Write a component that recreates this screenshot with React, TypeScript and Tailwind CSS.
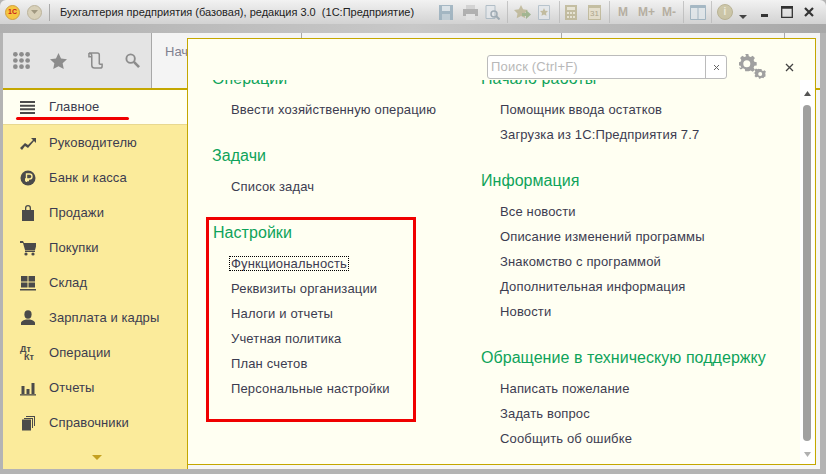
import React from "react";

const F = { fontFamily: '"Liberation Sans", Arial, sans-serif' };

function Ic({ children, w = 16, h = 16, fill = "#4a4a4a" }: { children: React.ReactNode; w?: number; h?: number; fill?: string }) {
  return (
    <svg width={w} height={h} viewBox={`0 0 ${w} ${h}`} fill={fill} className="shrink-0">
      {children}
    </svg>
  );
}

const sideIcons: Record<string, React.ReactNode> = {
  trend: <path d="M0 13l5-5 3 2 5-5-2-2h5v5l-2-2-6 7-3-2-3 4z" />,
  rub: (
    <>
      <circle cx="8" cy="8" r="7.5" />
      <path d="M6.5 12V4h3a2 2 0 010 5h-4.5M5 10.5h4" fill="none" stroke="#fbeb9b" strokeWidth="1.4" />
    </>
  ),
  bag: <path d="M2 5h3V3a3 3 0 016 0v2h3v11H2zM6.3 5h3.4V3a1.7 1.7 0 00-3.4 0z" fillRule="evenodd" />,
  cart: (
    <>
      <path d="M0 1h3l1 2h13l-2 7H5L3 3H0z" />
      <rect x="5" y="10.500" width="10" height="1.500" />
      <circle cx="6" cy="14" r="1.600" />
      <circle cx="13" cy="14" r="1.600" />
    </>
  ),
  grid: (
    <>
      <rect x="1" y="1" width="6.500" height="5.500" />
      <rect x="8.500" y="1" width="6.500" height="5.500" />
      <rect x="1" y="7.500" width="6.500" height="5" />
      <rect x="8.500" y="7.500" width="6.500" height="5" />
      <rect x="0" y="14" width="16" height="1.500" />
    </>
  ),
  user: (
    <>
      <ellipse cx="8" cy="4.500" rx="3.600" ry="4.200" />
      <path d="M1 15v-2c0-2 3-3 5-3.500h4c2 .5 5 1.500 5 3.500v2z" />
    </>
  ),
  bars: (
    <>
      <rect x="1.500" y="6" width="3" height="8" />
      <rect x="6.500" y="9" width="3" height="5" />
      <rect x="11.500" y="3" width="3" height="11" />
      <rect x="0" y="14.200" width="16" height="1.300" />
    </>
  ),
  books: (
    <>
      <rect x="2" y="4.500" width="9" height="11" />
      <path d="M4 3h9v10h-1V4H4zM6 1h9v10h-1V2H6z" />
    </>
  ),
};

const items: [string, string][] = [
  ["trend", "Руководителю"],
  ["rub", "Банк и касса"],
  ["bag", "Продажи"],
  ["cart", "Покупки"],
  ["grid", "Склад"],
  ["user", "Зарплата и кадры"],
  ["dt", "Операции"],
  ["bars", "Отчеты"],
  ["books", "Справочники"],
];

function SideRow({ icon, label }: { icon: string; label: string }) {
  return (
    <div className="h-[35px] flex items-center pl-[17px] gap-[13px] text-[13px] text-[#3c3c50] tracking-[0.1px]">
      {icon === "dt" ? (
        <div className="w-4 h-4 shrink-0 flex flex-col text-[9px] leading-[8px] font-bold text-[#4a4a4a]">
          <span>Дт</span>
          <span className="ml-[4px]">Кт</span>
        </div>
      ) : (
        <Ic>{sideIcons[icon]}</Ic>
      )}
      <span>{label}</span>
    </div>
  );
}

function Heading({ children, className = "" }: { children: React.ReactNode; className?: string }) {
  return <div className={`text-[16px] leading-[20px] text-[#0ea35a] tracking-[0.05px] ${className}`}>{children}</div>;
}

function Links({ list, focus }: { list: string[]; focus?: string }) {
  return (
    <div className="pl-[19px] mt-[8px] flex flex-col">
      {list.map((t) => (
        <div key={t} className="h-[25px] flex items-center text-[13px] text-[#3c3c50] whitespace-nowrap tracking-[0.15px]">
          <span className={t === focus ? "outline outline-1 outline-dotted outline-black -outline-offset-1 px-[2px] -mx-[2px] leading-[15px]" : ""}>{t}</span>
        </div>
      ))}
    </div>
  );
}

function ToolSep({ l = 0, r = 0 }: { l?: number; r?: number }) {
  return <div className="w-px h-[22px] bg-[#b8b8b8] shrink-0" style={{ marginLeft: l, marginRight: r }} />;
}

export default function App() {
  return (
    <div style={F} className="relative w-[826px] h-[474px] overflow-hidden bg-[#b4b4b4] flex flex-col">
      {/* title bar */}
      <div className="h-[24px] shrink-0 flex items-center bg-gradient-to-b from-[#f2f2f2] to-[#d2d2d2] rounded-t-[6px] pl-[5px]">
        <div className="w-[15px] h-[15px] rounded-full bg-[#f6c640] border border-[#d0a040] flex items-center justify-center text-[7px] font-bold text-[#c8201c] shrink-0">1С</div>
        <div className="w-[15px] h-[15px] rounded-full bg-[#d8d0b8] border border-[#bcb49c] flex items-center justify-center ml-[7px] shrink-0">
          <svg width="7" height="4" viewBox="0 0 7 4"><path d="M0 0h7L3.500 4z" fill="#a09880" /></svg>
        </div>
        <div className="w-px h-[17px] bg-[#aaa] ml-[7px] shrink-0" />
        <span className="ml-[10px] text-[11px] text-[#222] whitespace-pre w-[379px] shrink-0">Бухгалтерия предприятия (базовая), редакция 3.0  (1С:Предприятие)</span>
        <div className="flex items-center">
          <div className="flex items-center opacity-75">
            <svg width="14" height="15" viewBox="0 0 14 15" className="shrink-0"><path d="M0 0h14v15H0z" fill="#8fa8b8" /><path d="M3 1h8v5H3z" fill="#d8e2e8" /><path d="M3 9h8v6H3z" fill="#b8c8d2" /></svg>
            <svg width="15" height="15" viewBox="0 0 15 15" className="ml-[10px] shrink-0"><path d="M3 0h9v4H3z" fill="#ccc" /><path d="M0 4h15v7H0z" fill="#a0a0a0" /><path d="M3 9h9v6H3z" fill="#e4e4e4" /></svg>
            <svg width="15" height="15" viewBox="0 0 15 15" className="ml-[7px] shrink-0"><path d="M1 .5h9v13H1z" fill="#e4e8ec" stroke="#9fb0bc" /><circle cx="9" cy="9" r="3" fill="none" stroke="#8a9aa6" strokeWidth="1.500" /><path d="M11 11l3.500 3.500" stroke="#8a9aa6" strokeWidth="2" /></svg>
            <ToolSep l={7} r={6} />
            <svg width="17" height="15" viewBox="0 0 17 15" className="shrink-0"><path d="M7 0l2.100 4.300 4.900.7-3.500 3.400.8 4.800L7 10.900 2.700 13.200l.8-4.800L0 5l4.900-.7z" fill="#b8b08a" /><path d="M8 8h4V5l5 4.500L12 14v-3H8z" fill="#8ea878" /></svg>
            <svg width="12" height="15" viewBox="0 0 12 15" className="ml-[7px] shrink-0"><path d="M.5.5h11v14H.5z" fill="#e4e8ec" stroke="#a8b8c4" /><path d="M6 3l1.200 2.700 2.800.4-2 1.900.5 2.800L6 9.500l-2.500 1.300.5-2.800-2-1.900 2.800-.4z" fill="#b8b08a" /></svg>
            <ToolSep l={9} r={5} />
            <svg width="12" height="15" viewBox="0 0 12 15" className="shrink-0"><path d="M0 0h12v15H0z" fill="#b8b08a" /><path d="M2 2h8v3H2zM2 7h2v2H2zM5 7h2v2H5zM8 7h2v2H8zM2 11h2v2H2zM5 11h2v2H5zM8 11h2v2H8z" fill="#e8e4d0" /></svg>
            <div className="w-[13px] h-[15px] ml-[11px] bg-[#e4dcc4] border border-[#b8b08a] border-t-[3px] text-[8px] leading-[11px] text-center text-[#9a9070] shrink-0">31</div>
            <ToolSep l={8} r={8} />
            <div className="flex text-[12px] font-bold text-[#a89e8c] w-[64px] shrink-0">
              <span>M</span>
              <span className="ml-[10px]">M+</span>
              <span className="ml-[7px]">M-</span>
            </div>
            <ToolSep l={1} r={6} />
            <svg width="16" height="15" viewBox="0 0 16 15" className="shrink-0"><path d="M.5.5h15v14H.5z" fill="#dfe6ea" stroke="#8fa8b8" /><path d="M.5.5h15v2.500H.5z" fill="#8fa8b8" /><path d="M8 1v13" stroke="#8fa8b8" /></svg>
            <ToolSep l={5} r={5} />
            <div className="w-[16px] h-[16px] rounded-full bg-[#c4bc94] border border-[#aca47c] text-[10px] leading-[14px] text-center font-bold text-[#f0ecd8] shrink-0">i</div>
          </div>
          <svg width="8" height="4" viewBox="0 0 8 4" className="ml-[6px] mt-[10px] shrink-0"><path d="M0 0h8L4 4z" fill="#444" /></svg>
          <svg width="7" height="3" viewBox="0 0 7 3" className="ml-[14px] mt-[6px] shrink-0"><path d="M0 0h7v3H0z" fill="#333" /></svg>
          <svg width="12" height="12" viewBox="0 0 12 12" className="ml-[13px] shrink-0"><path d="M.7 2h10.600v9.300H.7z" fill="none" stroke="#333" strokeWidth="1.300" /><path d="M0 0h12v2H0z" fill="#333" /></svg>
          <svg width="10" height="10" viewBox="0 0 10 10" className="ml-[11px] shrink-0"><path d="M1 1l8 8M9 1l-8 8" stroke="#333" strokeWidth="2.200" /></svg>
        </div>
      </div>
      <div className="h-[9px] shrink-0 bg-gradient-to-r from-[#b0b0b0] via-[#c8c8c8] to-[#a8a8a8]" />

      {/* window body */}
      <div className="flex-1 flex flex-col ml-[3px] mr-[6px] mb-[5px] min-h-0 bg-[#f6f6f6]">
        {/* toolbar and tabs */}
        <div className="h-[57px] shrink-0 flex bg-[#e4e4e4] border-b-[2px] border-[#c4a700]">
          <div className="w-[149px] flex items-center pl-[10px] gap-[20px] shrink-0 border-r border-[#a8a8a8]">
            <svg width="17" height="17" viewBox="0 0 18 18" fill="#8c8c8c" className="shrink-0">
              {[2.500, 9, 15.500].flatMap((y) => [2.500, 9, 15.500].map((x) => <circle key={`${x}-${y}`} cx={x} cy={y} r="2.500" />))}
            </svg>
            <svg width="17" height="16" viewBox="0 0 18 17" fill="#8c8c8c" className="shrink-0"><path d="M9 0l2.700 5.800 6.300.8-4.600 4.300 1.200 6.100L9 14l-5.600 3 1.200-6.100L0 6.600l6.300-.8z" /></svg>
            <svg width="16" height="17" viewBox="0 0 17 18" fill="none" stroke="#8c8c8c" strokeWidth="1.600" className="shrink-0 ml-px"><path d="M1 1h9c1.500 0 2 1 2 2v10M1 1c2 0 3 1 3 3v10c0 2 1 3 3 3h7M1 1v4h3M12 13h3v2a2 2 0 01-2 2" /></svg>
            <svg width="15" height="15" viewBox="0 0 16 16" fill="none" stroke="#8c8c8c" className="shrink-0 ml-px"><circle cx="6" cy="6" r="4.500" strokeWidth="2" /><path d="M9.500 9.500L15 15" strokeWidth="2.800" /></svg>
          </div>
          <div className="flex-1 flex items-start bg-[#f4f4f4]">
            <div className="w-[150px] h-[17px] border-r border-[#a8a8a8] pl-[13px] shrink-0">
              <span className="text-[13px] leading-[38px] text-[#808090] whitespace-nowrap">Начальная страница</span>
            </div>
            <div className="w-[260px] h-[17px] border-r border-[#a8a8a8] shrink-0" />
            <div className="w-[223px] h-[17px] border-r border-[#a8a8a8] shrink-0" />
          </div>
        </div>

        {/* sidebar */}
        <div className="flex-1 min-h-0 w-[185px] flex flex-col border-r border-[#c4a700] bg-[#fbeb9b]">
          <div className="h-[35px] shrink-0 flex items-center pl-[17px] gap-[14px] bg-[#fffff2] border-b border-[#e8d890] text-[13px] text-[#3c3c50] tracking-[0.1px]">
            <svg width="15" height="13" viewBox="0 0 15 13" fill="#4a4a4a" className="shrink-0"><path d="M0 0h15v2H0zM0 3.700h15v2H0zM0 7.300h15v2H0zM0 11h15v2H0z" /></svg>
            <span>Главное</span>
          </div>
          <div className="flex-1 flex flex-col">
            {items.map(([i, l]) => (
              <SideRow key={l} icon={i} label={l} />
            ))}
          </div>
          <div className="h-[14px] flex justify-center pl-[4px]">
            <svg width="10" height="5" viewBox="0 0 10 5"><path d="M0 0h10L5 5z" fill="#c4a020" /></svg>
          </div>
        </div>
      </div>

      {/* flyout panel lying over the page */}
      <div className="absolute left-[187px] top-[38px] w-[629px] h-[427px] border border-[#c4a700] bg-[#fffff2] flex flex-col">
        <div className="h-[41px] shrink-0 flex items-start justify-end">
          <div className="mt-[16px] w-[240px] h-[24px] flex bg-white border border-[#bbb] rounded-[3px]">
            <span className="flex-1 pl-[3px] text-[13px] leading-[22px] text-[#b8b8b8] tracking-[0.2px]">Поиск (Ctrl+F)</span>
            <div className="w-[21px] border-l border-[#bbb] flex items-center justify-center">
              <svg width="7" height="7" viewBox="0 0 7 7"><path d="M1 1l5 5M6 1l-5 5" stroke="#666" /></svg>
            </div>
          </div>
          <svg width="27" height="26" viewBox="0 0 27 26" className="mt-[15px] ml-[12px] shrink-0" fill="#a0a0a0">
            <path fillRule="evenodd" d="M8 0h4l.6 3 2.400 1 2.600-1.700 2.800 2.800L18.700 7.700l1 2.300 3 .6v4l-3 .6-1 2.400 1.700 2.500-2.800 2.800-2.600-1.700-2.400 1-.6 0h-4l-.6-3-2.400-1-2.600 1.700-2.800-2.800L3 17.600 2 15.200l-2-.6v-4l2-.6 1-2.300-1.600-2.600 2.800-2.800L6.800 4l2.400-1zM10 8a4.500 4.500 0 100 9 4.500 4.500 0 000-9z" transform="scale(.78)" />
            <path fillRule="evenodd" d="M20 15h2.500l.4 1.500 1.300.6 1.300-.8 1.500 1.500-.8 1.300.3 1.300 0 2.100-1.300.5-.8 1.300-1.500-.6-1.300.5-.4.5H20l-.4-1.500-1.300-.5-1.300.8-1.500-1.500.8-1.300-.5-1.300-1.500-.4V19l1.500-.4.5-1.300-.8-1.300 1.500-1.500 1.300.8 1.300-.6zM21.200 18a2 2 0 100 4 2 2 0 000-4z" />
          </svg>
          <svg width="9" height="9" viewBox="0 0 9 9" className="mt-[24px] ml-[19px] mr-[21px] shrink-0"><path d="M1 1l7 7M8 1L1 8" stroke="#444" strokeWidth="1.300" /></svg>
        </div>

        <div className="flex-1 flex min-h-0">
          <div className="flex-1 min-w-0 overflow-hidden pl-[24px] flex">
            <div className="w-[269px] shrink-0">
              <Heading className="-mt-[11px]">Операции</Heading>
              <Links list={["Ввести хозяйственную операцию"]} />
              <Heading className="mt-[24px]">Задачи</Heading>
              <Links list={["Список задач"]} />
              <Heading className="mt-[24px] ml-px">Настройки</Heading>
              <Links
                focus="Функциональность"
                list={["Функциональность", "Реквизиты организации", "Налоги и отчеты", "Учетная политика", "План счетов", "Персональные настройки"]}
              />
            </div>
            <div className="flex-1 min-w-0">
              <Heading className="-mt-[11px]">Начало работы</Heading>
              <Links list={["Помощник ввода остатков", "Загрузка из 1С:Предприятия 7.7"]} />
              <Heading className="mt-[24px]">Информация</Heading>
              <Links list={["Все новости", "Описание изменений программы", "Знакомство с программой", "Дополнительная информация", "Новости"]} />
              <Heading className="mt-[24px]">Обращение в техническую поддержку</Heading>
              <Links list={["Написать пожелание", "Задать вопрос", "Сообщить об ошибке"]} />
            </div>
          </div>
          {/* scrollbar */}
          <div className="w-[14px] bg-white flex flex-col items-center pb-[7px] shrink-0 mr-px">
            <svg width="7" height="5" viewBox="0 0 7 5" className="mt-[11px] shrink-0"><path d="M3.500 0L7 5H0z" fill="#555" /></svg>
            <div className="w-[8px] flex-1 mt-[9px] mb-[11px] rounded-full bg-[#a0a0a0]" />
            <svg width="7" height="5" viewBox="0 0 7 5" className="shrink-0"><path d="M0 0h7L3.500 5z" fill="#b0b0b0" /></svg>
          </div>
        </div>
      </div>

      {/* hand-drawn annotations on the screenshot */}
      <div className="absolute left-[16px] top-[117px] w-[113px] h-[3px] rounded-full bg-[#f00000]" />
      <div className="absolute left-[206px] top-[217px] w-[210px] h-[205px] border-[3px] border-[#f00000]" />
    </div>
  );
}
